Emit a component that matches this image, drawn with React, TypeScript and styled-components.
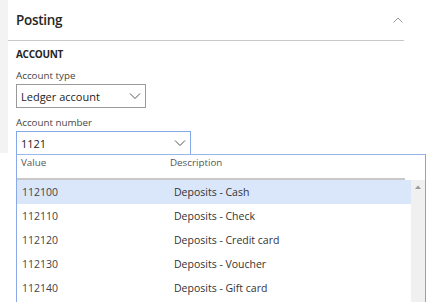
import React from "react";
import styled, { createGlobalStyle } from "styled-components";

const Global = createGlobalStyle`
  html, body { margin: 0; padding: 0; background: #ffffff; }
  body { font-family: "Open Sans", "Noto Sans", sans-serif; color: #333; }
  * { box-sizing: border-box; }
`;

const Page = styled.div`
  display: flex;
  width: 427px;
  height: 304px;
  overflow: hidden;
  background: #fff;
`;

const Strip = styled.div`
  width: 8px;
  height: 153px;
  background: #f3f3f3;
  flex: none;
`;

const Panel = styled.section`
  width: 396px;
  flex: none;
  display: flex;
  flex-direction: column;
`;

const Header = styled.div`
  height: 41px;
  display: flex;
  align-items: center;
  justify-content: space-between;
  padding: 0 0 1px 8px;
  border-bottom: 1px solid #c8c8c8;
`;

const Title = styled.h2`
  margin: 0;
  font-size: 13.5px;
  font-weight: 600;
  color: #262626;
  letter-spacing: -0.3px;
`;

const Body = styled.div`
  padding: 5px 0 0 8px;
  display: flex;
  flex-direction: column;
`;

const Group = styled.div`
  font-size: 10px;
  font-weight: 700;
  color: #262626;
  height: 16px;
  line-height: 16px;
  letter-spacing: -0.3px;
`;

const Label = styled.div<{ $top: number }>`
  margin-top: ${(p) => p.$top}px;
  font-size: 9.8px;
  color: #444;
  height: 14px;
  line-height: 14px;
`;

const Field = styled.div<{ $w: number; $top: number; $active?: boolean }>`
  position: relative;
  margin-top: ${(p) => p.$top}px;
  width: ${(p) => p.$w}px;
  height: 24px;
  border: 1px solid ${(p) => (p.$active ? "#86a8e8" : "#9a9a9a")};
  display: flex;
  align-items: center;
  justify-content: space-between;
  padding: 0 4px 0 4px;
  font-size: 11px;
  color: #222;
`;

const Chevron = styled.svg`
  width: 12px;
  height: 8px;
  flex: none;
`;

const Popup = styled.div`
  position: absolute;
  left: -17px;
  top: 22px;
  width: 426px;
  height: 149px;
  background: #fff;
  padding-left: 16px;
`;

const ListBox = styled.div`
  height: 148px;
  border-top: 1px solid #9ab7ea;
  border-left: 1px solid #8aa9e6;
  border-right: 1px solid #a0a0a0;
  display: flex;
  flex-direction: column;
`;

const HeadRow = styled.div`
  height: 25px;
  margin-right: 20px;
  border-bottom: 2px solid #c8c8c8;
  display: grid;
  grid-template-columns: 149px 1fr;
  padding: 1px 0 0 4px;
  font-size: 9.8px;
  color: #555;
  line-height: 14px;
`;

const Rows = styled.div`
  display: flex;
  flex: 1;
`;

const RowList = styled.div`
  flex: 1;
  display: flex;
  flex-direction: column;
`;

const Row = styled.div<{ $sel?: boolean }>`
  height: 24px;
  display: grid;
  grid-template-columns: 152px 1fr;
  align-items: center;
  padding-left: 5px;
  font-size: 10.5px;
  background: ${(p) => (p.$sel ? "#dae6fa" : "transparent")};
`;

const Val = styled.span`
  color: #444;
`;

const Desc = styled.span`
  color: #333;
`;

const Scroll = styled.div`
  width: 14px;
  background: #f0f0f0;
  display: flex;
  justify-content: center;
  padding-top: 5px;
`;

const rows = [
  ["112100", "Deposits - Cash"],
  ["112110", "Deposits - Check"],
  ["112120", "Deposits - Credit card"],
  ["112130", "Deposits - Voucher"],
  ["112140", "Deposits - Gift card"],
];

const Down = () => (
  <Chevron viewBox="0 0 12 8">
    <path d="M1 1.5 L6 6.5 L11 1.5" fill="none" stroke="#555" strokeWidth="1" />
  </Chevron>
);

export default function App() {
  return (
    <Page>
      <Global />
      <Strip />
      <Panel>
        <Header>
          <Title>Posting</Title>
          <svg width="10" height="6" viewBox="0 0 10 6" style={{ marginRight: 1 }}>
            <path d="M0.5 5.5 L5 1 L9.5 5.5" fill="none" stroke="#9a9a9a" strokeWidth="1" />
          </svg>
        </Header>
        <Body>
          <Group>ACCOUNT</Group>
          <Label $top={7}>Account type</Label>
          <Field $w={130} $top={1}>
            <span>Ledger account</span>
            <Down />
          </Field>
          <Label $top={8}>Account number</Label>
          <Field $w={175} $top={1} $active>
            <span>1121</span>
            <Down />
            <Popup>
              <ListBox>
                <HeadRow>
                  <span>Value</span>
                  <span>Description</span>
                </HeadRow>
                <Rows>
                  <RowList>
                    {rows.map(([v, d], i) => (
                      <Row key={v} $sel={i === 0}>
                        <Val>{v}</Val>
                        <Desc>{d}</Desc>
                      </Row>
                    ))}
                  </RowList>
                  <Scroll>
                    <svg width="6" height="4" viewBox="0 0 6 4">
                      <path d="M0 4 L3 0.5 L6 4 Z" fill="#9a9a9a" />
                    </svg>
                  </Scroll>
                </Rows>
              </ListBox>
            </Popup>
          </Field>
        </Body>
      </Panel>
    </Page>
  );
}
